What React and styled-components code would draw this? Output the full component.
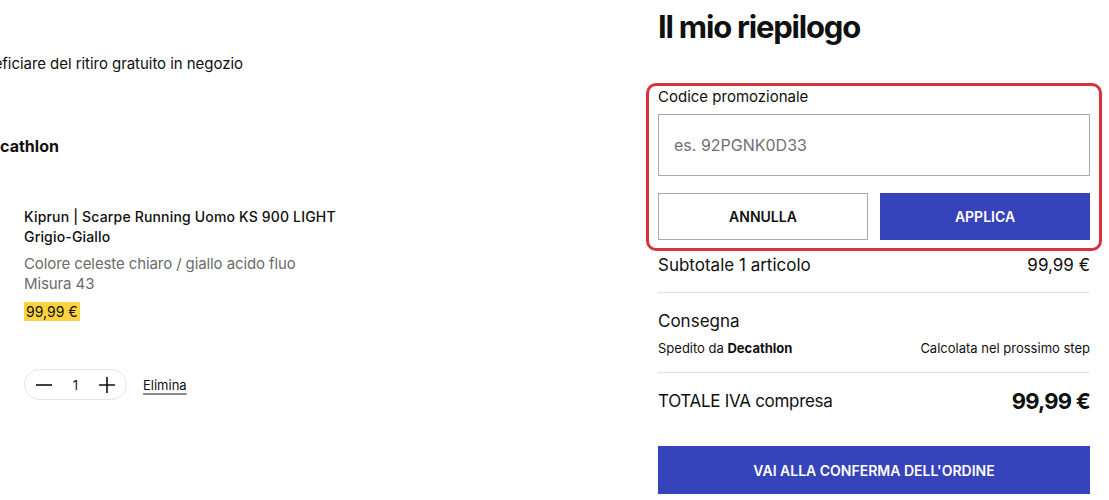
import React from 'react';
import styled, { createGlobalStyle } from 'styled-components';

const GlobalStyle = createGlobalStyle`
    body {
        margin: 0;
        background: #ffffff;
        font-family: Inter, "Noto Sans", sans-serif;
        color: #101010;
        overflow: hidden;
    }
`;

const Page = styled.div`
    display: flex;
    width: 1109px;
    height: 500px;
    overflow: hidden;
`;

const CartColumn = styled.div`
    flex: 0 0 690px;
    margin-left: -32px;
    display: flex;
    flex-direction: column;
`;

const Notice = styled.div`
    margin: 54px 0 0 -1px;
    font-size: 15px;
    line-height: 20px;
    letter-spacing: -0.05px;
    white-space: nowrap;
`;

const SellerTitle = styled.div`
    margin-top: 62px;
    padding-left: 11px;
    font-size: 16px;
    line-height: 20px;
    font-weight: 700;
`;

const Product = styled.div`
    margin-top: 51px;
    padding-left: 56px;
    display: flex;
    flex-direction: column;
    align-items: flex-start;
`;

const ProductName = styled.div`
    font-size: 14px;
    line-height: 20px;
    font-weight: 500;
    letter-spacing: 0.17px;
    width: 340px;
`;

const ProductMeta = styled.div`
    margin-top: 7px;
    font-size: 15px;
    line-height: 20px;
    letter-spacing: -0.1px;
    color: #6b6b6b;
`;

const PriceTag = styled.span`
    margin-top: 8px;
    background: #ffd340;
    padding: 0 2px;
    font-size: 14px;
    line-height: 19px;
`;

const Actions = styled.div`
    margin-top: 48px;
    display: flex;
    align-items: center;
    gap: 16px;
`;

const Stepper = styled.div`
    width: 103px;
    height: 31px;
    box-sizing: border-box;
    border: 1px solid #e4e4e4;
    border-radius: 16px;
    display: flex;
    align-items: center;
    justify-content: space-between;
    padding: 0 9px;
`;

const StepButton = styled.button`
    border: none;
    background: none;
    padding: 0;
    width: 20px;
    height: 20px;
    display: flex;
    align-items: center;
    justify-content: center;
    color: #101010;
`;

const Quantity = styled.span`
    font-size: 13px;
`;

const RemoveLink = styled.a`
    font-size: 13px;
    color: #101010;
    text-decoration: underline;
    text-decoration-color: #8a8a8a;
    text-decoration-thickness: 2px;
    text-underline-offset: 3px;
`;

const SummaryColumn = styled.div`
    width: 432px;
    display: flex;
    flex-direction: column;
`;

const Heading = styled.h1`
    margin: 9px 0 0;
    font-size: 31px;
    line-height: 36px;
    font-weight: 700;
    letter-spacing: -1.2px;
`;

const PromoBox = styled.div`
    margin: 38px -12px 0;
    border: 3px solid #d7333d;
    border-radius: 10px;
    padding: 1px 9px 8px;
    display: flex;
    flex-direction: column;
`;

const PromoLabel = styled.label`
    font-size: 15px;
    line-height: 20px;
`;

const PromoInput = styled.input`
    margin-top: 7px;
    height: 62px;
    box-sizing: border-box;
    border: 1px solid #a9a9a9;
    padding: 0 15px;
    font-family: Inter, "Noto Sans", sans-serif;
    font-size: 16px;
    outline: none;
    &::placeholder {
        color: #707070;
    }
`;

const ButtonRow = styled.div`
    margin-top: 17px;
    display: grid;
    grid-template-columns: 1fr 1fr;
    gap: 12px;
`;

const Button = styled.button`
    height: 47px;
    box-sizing: border-box;
    border: 1px solid ${p => (p.$primary ? '#3643ba' : '#a9a9a9')};
    background: ${p => (p.$primary ? '#3643ba' : '#ffffff')};
    color: ${p => (p.$primary ? '#ffffff' : '#101010')};
    font-family: Inter, "Noto Sans", sans-serif;
    font-size: 14px;
    font-weight: 600;
    text-transform: uppercase;
    cursor: pointer;
`;

const Row = styled.div`
    display: flex;
    justify-content: space-between;
    align-items: center;
    font-size: ${p => p.$size || 17}px;
    line-height: ${p => p.$line || 24}px;
    letter-spacing: ${p => p.$spacing || 0}px;
    margin-top: ${p => p.$top || 0}px;
`;

const Divider = styled.hr`
    margin: ${p => p.$top}px 0 0;
    border: none;
    border-top: 1px solid #e1e1e1;
`;

const TotalPrice = styled.span`
    font-size: 22px;
    font-weight: 700;
    letter-spacing: -0.8px;
`;

const ConfirmButton = styled(Button)`
    margin-top: 31px;
    height: 48px;
`;

const MinusIcon = () => (
    <svg width="18" height="18" viewBox="0 0 18 18">
        <path d="M1 9h16" stroke="currentColor" strokeWidth="1.6" />
    </svg>
);

const PlusIcon = () => (
    <svg width="18" height="18" viewBox="0 0 18 18">
        <path d="M1 9h16M9 1v16" stroke="currentColor" strokeWidth="1.6" />
    </svg>
);

function App() {
    return (
        <React.Fragment>
            <GlobalStyle />
            <Page>
                <CartColumn>
                    <Notice>beneficiare del ritiro gratuito in negozio</Notice>
                    <SellerTitle>Decathlon</SellerTitle>
                    <Product>
                        <ProductName>Kiprun | Scarpe Running Uomo KS 900 LIGHT Grigio-Giallo</ProductName>
                        <ProductMeta>
                            Colore celeste chiaro / giallo acido fluo<br />
                            Misura 43
                        </ProductMeta>
                        <PriceTag>99,99 €</PriceTag>
                        <Actions>
                            <Stepper>
                                <StepButton aria-label="Diminuisci"><MinusIcon /></StepButton>
                                <Quantity>1</Quantity>
                                <StepButton aria-label="Aumenta"><PlusIcon /></StepButton>
                            </Stepper>
                            <RemoveLink href="#">Elimina</RemoveLink>
                        </Actions>
                    </Product>
                </CartColumn>
                <SummaryColumn>
                    <Heading>Il mio riepilogo</Heading>
                    <PromoBox>
                        <PromoLabel>Codice promozionale</PromoLabel>
                        <PromoInput placeholder="es. 92PGNK0D33" />
                        <ButtonRow>
                            <Button>Annulla</Button>
                            <Button $primary>Applica</Button>
                        </ButtonRow>
                    </PromoBox>
                    <Row $top={2}>
                        <span>Subtotale 1 articolo</span>
                        <span>99,99 €</span>
                    </Row>
                    <Divider $top={15} />
                    <Row $top={16}>
                        <span>Consegna</span>
                    </Row>
                    <Row $size={13} $line={18} $top={6}>
                        <span>Spedito da <b>Decathlon</b></span>
                        <span>Calcolata nel prossimo step</span>
                    </Row>
                    <Divider $top={15} />
                    <Row $size={17} $line={28} $spacing={-0.3} $top={14}>
                        <span>TOTALE IVA compresa</span>
                        <TotalPrice>99,99 €</TotalPrice>
                    </Row>
                    <ConfirmButton $primary>Vai alla conferma dell'ordine</ConfirmButton>
                </SummaryColumn>
            </Page>
        </React.Fragment>
    );
}

export default App;
